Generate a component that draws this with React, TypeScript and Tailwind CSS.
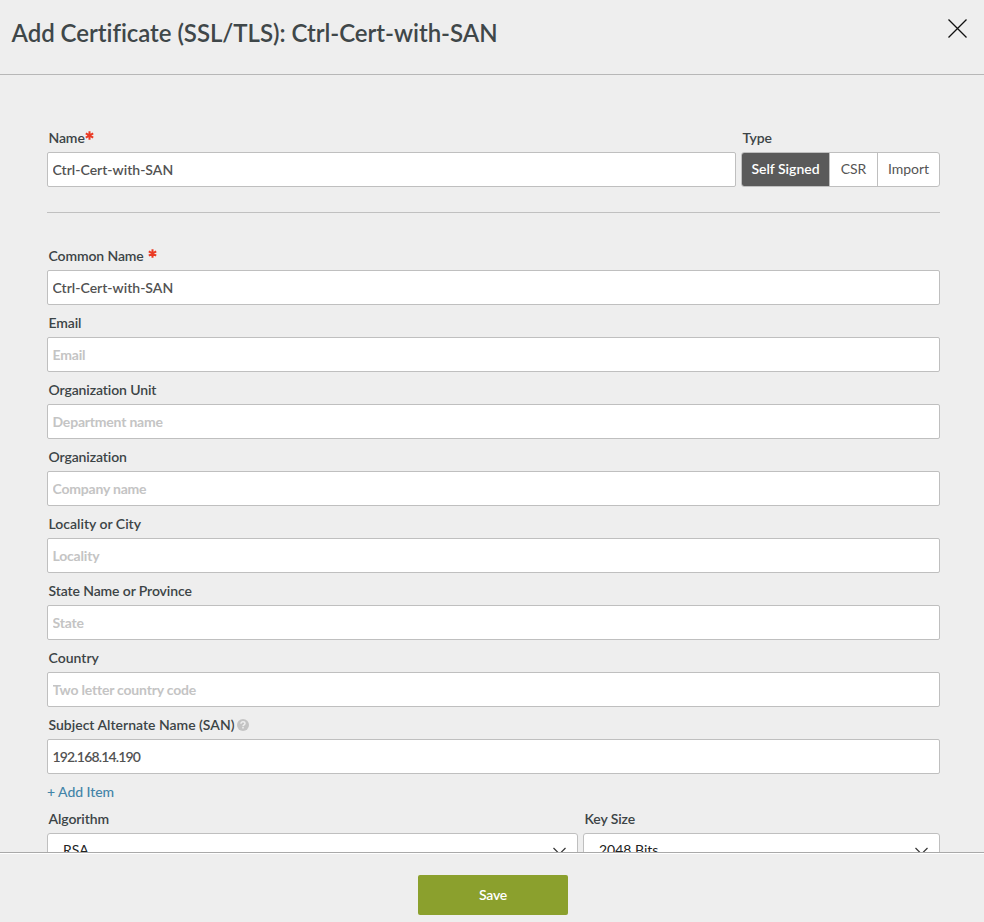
import React from "react";

type FieldProps = {
  label: string;
  labelClass?: string;
  value?: string;
  placeholder?: string;
  inputClass?: string;
  extra?: React.ReactNode;
};

function Asterisk({ className = "" }: { className?: string }) {
  return (
    <svg className={`h-[9px] w-[9px] shrink-0 ${className}`} viewBox="0 0 9 9" stroke="#ea3a24" strokeWidth="2" fill="none">
      <path d="M4.5 0.3v8.4M0.8 2.4l7.4 4.2M8.2 2.4l-7.4 4.2" />
    </svg>
  );
}

function Label({ text, className = "tracking-[-0.11px]", extra }: { text: string; className?: string; extra?: React.ReactNode }) {
  return (
    <div className="flex h-5 items-center pl-[1.5px] text-[14px] leading-5 font-semibold whitespace-nowrap text-[#3c4446]">
      <span className={className}>{text}</span>
      {extra}
    </div>
  );
}

function Field({ label, labelClass, value, placeholder, inputClass = "tracking-[-0.12px]", extra }: FieldProps) {
  return (
    <div className="pt-2">
      <Label text={label} className={labelClass} extra={extra} />
      <input
        className={`mt-1 block h-[35px] w-full rounded-[2px] border border-[#bfbfbf] bg-white px-[4.5px] text-[14px] font-semibold text-[#525252] outline-none placeholder:font-bold placeholder:tracking-[-0.2px] placeholder:text-[#c4c4c4] ${inputClass}`}
        defaultValue={value}
        placeholder={placeholder}
      />
    </div>
  );
}

function Select({ label, value, className }: { label: string; value: string; className: string }) {
  return (
    <div className={className}>
      <Label text={label} />
      <div className="mt-1 flex h-[35px] items-center justify-between rounded-[3px] border border-[#bfbfbf] bg-white pr-[11px] pb-[2px] pl-[15px] text-[14px] text-[#222]">
        <span>{value}</span>
        <svg className="mt-[2px] h-[8px] w-[13px]" viewBox="0 0 13 8" fill="none" stroke="#333" strokeWidth="1.2">
          <path d="M0.5 1l6 6 6-6" />
        </svg>
      </div>
    </div>
  );
}

export default function App() {
  return (
    <div className="flex h-[922px] w-[984px] flex-col overflow-hidden bg-[#eeeeee] font-['Lato','Liberation_Sans',sans-serif]">
      <header className="flex h-[75px] shrink-0 items-start justify-between border-b border-[#b7b7b7] pt-[17px] pr-[17px] pl-[11.5px]">
        <h1 className="text-[24px] leading-8 font-semibold tracking-[-0.04px] whitespace-nowrap text-[#3f4749]">Add Certificate (SSL/TLS): Ctrl-Cert-with-SAN</h1>
        <svg className="mt-[2px] h-[19px] w-[19px]" viewBox="0 0 19 19" fill="none" stroke="#111" strokeWidth="1.3">
          <path d="M0.5 0.5l18 18M18.5 0.5l-18 18" />
        </svg>
      </header>

      <main className="min-h-0 flex-1 overflow-hidden pt-[53px] pr-[44px] pl-[47px]">
        <div className="flex gap-[5px] border-b border-[#c0c0c0] pb-[25px]">
          <div className="flex-1">
            <Label text="Name" extra={<Asterisk className="mb-[5px]" />} />
            <input
              className="mt-1 block h-[35px] w-full rounded-[2px] border border-[#bfbfbf] bg-white px-[4.5px] text-[14px] font-semibold text-[#525252] outline-none"
              defaultValue="Ctrl-Cert-with-SAN"
            />
          </div>
          <div className="w-[199px]">
            <Label text="Type" />
            <div className="mt-1 flex h-[35px] overflow-hidden rounded-[3px] border border-[#bfbfbf] bg-white text-[14px] text-[#555]">
              <button className="w-[87px] bg-[#5a5a5a] pb-[2px] font-semibold text-white">Self Signed</button>
              <button className="w-[49px] border-r border-l border-[#bfbfbf] pb-[2px]">CSR</button>
              <button className="flex-1 pb-[2px]">Import</button>
            </div>
          </div>
        </div>

        <div className="pt-[25px]">
          <Field
            label="Common Name"
            value="Ctrl-Cert-with-SAN"
            inputClass="tracking-normal"
            extra={<Asterisk className="mb-[5px] ml-[4px]" />}
          />
          <Field label="Email" placeholder="Email" />
          <Field label="Organization Unit" placeholder="Department name" />
          <Field label="Organization" placeholder="Company name" />
          <Field label="Locality or City" labelClass="tracking-normal" placeholder="Locality" />
          <Field label="State Name or Province" placeholder="State" />
          <Field label="Country" labelClass="tracking-normal" placeholder="Two letter country code" />
          <Field
            label="Subject Alternate Name (SAN)"
            labelClass="tracking-normal"
            value="192.168.14.190"
            inputClass="tracking-[-0.83px]"
            extra={
              <svg className="ml-[3px] h-3 w-3" viewBox="0 0 12 12" fill="none">
                <circle cx="6" cy="6" r="6" fill="#c4c4c4" />
                <path d="M4 4.7C4 3.5 4.9 2.8 6 2.8s2 .7 2 1.7c0 1.3-2 1.4-2 2.7" stroke="#eeeeee" strokeWidth="1.5" />
                <path d="M6 8v1.6" stroke="#eeeeee" strokeWidth="1.6" />
              </svg>
            }
          />
          <div className="flex h-[35px] items-center text-[14px] font-medium tracking-[-0.05px] text-[#4384a8]">
            <a>+ Add Item</a>
          </div>
          <div className="flex gap-[5px]">
            <Select label="Algorithm" value="RSA" className="w-[531px]" />
            <Select label="Key Size" value="2048 Bits" className="flex-1" />
          </div>
        </div>
      </main>

      <footer className="h-[70px] shrink-0 border-t border-[#a9a9a9]">
        <div className="flex w-full items-start justify-center border-t border-white pt-[21px] pl-[2px]">
          <button className="h-10 w-[150px] rounded-[2px] bg-[#8ba02d] pb-[2px] text-[14px] font-semibold tracking-[-0.2px] text-white">Save</button>
        </div>
      </footer>
    </div>
  );
}
